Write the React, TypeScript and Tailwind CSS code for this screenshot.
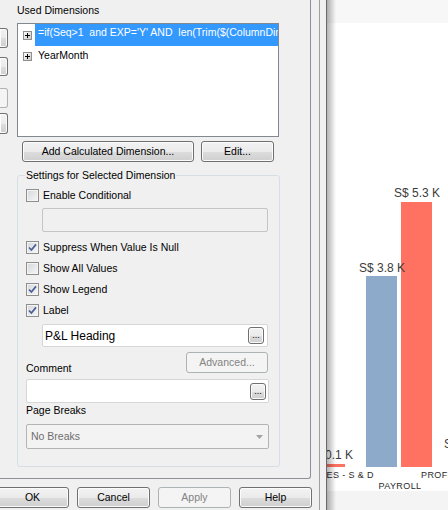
import { FC, ReactNode } from "react"
import clsx from "clsx"

const raised =
  "border-[#707070] bg-[linear-gradient(#f2f2f2,#ebebeb_50%,#dddddd_51%,#cfcfcf)] shadow-[inset_0_0_0_1px_#fbfbfb]"

interface WinButtonProps {
  children?: ReactNode
  className?: string
  disabled?: boolean
}

const WinButton: FC<WinButtonProps> = ({ children, className, disabled }) => (
  <button
    type="button"
    className={clsx(
      "flex h-[21px] shrink-0 items-center justify-center rounded-[3px] border text-[10.5px] leading-none",
      disabled ? "border-[#adb2b5] bg-[#f4f4f4] text-[#838383]" : clsx(raised, "text-black"),
      className
    )}
  >
    {children}
  </button>
)

const DotsButton: FC<{ className?: string }> = ({ className }) => (
  <button
    type="button"
    className={clsx(
      "flex h-[17px] w-[16px] items-end justify-center rounded-[3px] border pb-[3px] text-[9px] leading-none",
      raised,
      className
    )}
  >
    ...
  </button>
)

const CheckBox: FC<{ label: string; checked?: boolean }> = ({ label, checked }) => (
  <div className="flex h-[13px] items-center gap-[4px]">
    <span className="flex h-[13px] w-[13px] shrink-0 items-center justify-center border border-[#8e8f8f] bg-[linear-gradient(135deg,#d4d6da,#f7f7f7)] shadow-[inset_0_0_0_1px_#f4f4f4]">
      {checked && (
        <svg width="11" height="11" viewBox="0 0 11 11">
          <path d="M2 5.5 L4.4 8 L9 2.4" fill="none" stroke="#4a5f97" strokeWidth="1.7" />
        </svg>
      )}
    </span>
    <span className="leading-[13px] whitespace-nowrap">{label}</span>
  </div>
)

const Expander = () => (
  <svg width="9" height="9" viewBox="0 0 9 9" className="shrink-0">
    <defs>
      <linearGradient id="exp" x1="0" y1="0" x2="1" y2="1">
        <stop offset="0" stopColor="#ffffff" />
        <stop offset="1" stopColor="#c6c6c6" />
      </linearGradient>
    </defs>
    <rect x="0.5" y="0.5" width="8" height="8" fill="url(#exp)" stroke="#8f8f8f" />
    <path d="M2 4.5h5M4.5 2v5" stroke="#000" strokeWidth="1" />
  </svg>
)

// buttons of the neighbouring list, cut by the left edge
const SideButtons = () => (
  <div className="flex w-[8px] shrink-0 flex-col">
    <div className={clsx("mt-[28px] h-[20px] rounded-r-[3px] border border-l-0", raised)} />
    <div className={clsx("mt-[9px] h-[19px] rounded-r-[3px] border border-l-0", raised)} />
    <div className="mt-[12px] h-[20px] rounded-r-[3px] border border-l-0 border-[#adb2b5] bg-[#f4f4f4]" />
    <div className={clsx("mt-[5px] h-[21px] rounded-r-[3px] border border-l-0", raised)} />
  </div>
)

const DimensionList = () => (
  <div className="mt-[6px] h-[114px] w-[262px] overflow-hidden border border-[#828790] bg-white">
    <div className="flex h-[22px] items-start pl-[5px]">
      <div className="mt-[7px]">
        <Expander />
      </div>
      <div className="ml-[3px] h-[22px] flex-1 overflow-hidden bg-[#3399ff] pt-[2px] pl-[3px] leading-[13px] whitespace-pre text-white">
        {"=if(Seq>1  and EXP='Y' AND  len(Trim($(ColumnDim)))>0, PL_Heading)"}
      </div>
    </div>
    <div className="flex h-[20px] items-start pl-[5px]">
      <div className="mt-[6px]">
        <Expander />
      </div>
      <div className="ml-[6px] pt-[3px] leading-[13px]">YearMonth</div>
    </div>
  </div>
)

const DimensionSettings = () => (
  <fieldset className="mt-[7px] w-[263px] rounded-[3px] border border-[#d5dfe5] pb-[17px] pl-[8px]">
    <legend className="-ml-px px-px leading-[13px]">Settings for Selected Dimension</legend>

    <div className="mt-[7px]">
      <CheckBox label="Enable Conditional" />
    </div>
    <div className="mt-[6px] ml-[16px] h-[24px] w-[226px] rounded-[2px] border border-[#c5c5c5] bg-[#f0f0f0]" />

    <div className="mt-[9px]">
      <CheckBox label="Suppress When Value Is Null" checked />
    </div>
    <div className="mt-[8px]">
      <CheckBox label="Show All Values" />
    </div>
    <div className="mt-[8px]">
      <CheckBox label="Show Legend" checked />
    </div>
    <div className="mt-[8px]">
      <CheckBox label="Label" checked />
    </div>

    <div className="mt-[7px] ml-[16px] flex h-[23px] w-[226px] items-center justify-between rounded-[2px] border border-[#d6d6d6] bg-white pr-[3px] pl-[2px]">
      <span className="text-[12px] leading-none">P&amp;L Heading</span>
      <DotsButton />
    </div>

    <div className="mt-[5px] flex h-[21px] w-[242px] items-start justify-between">
      <span className="mt-[10px] leading-[13px]">Comment</span>
      <WinButton disabled className="w-[82px]">
        Advanced...
      </WinButton>
    </div>

    <div className="mt-[6px] flex h-[24px] w-[243px] items-center justify-end rounded-[2px] border border-[#d6d6d6] bg-white pr-[2px]">
      <DotsButton />
    </div>

    <div className="mt-[1px] leading-[13px]">Page Breaks</div>

    <div className="mt-[7px] flex h-[25px] w-[243px] items-center justify-between rounded-[2px] border border-[#b4b4b4] bg-[#f3f3f3] pr-[5px] pl-[4px]">
      <span className="leading-none text-[#6d6d6d]">No Breaks</span>
      <svg width="7" height="4" viewBox="0 0 7 4">
        <path d="M0 0h7L3.5 4z" fill="#a3a3a3" />
      </svg>
    </div>
  </fieldset>
)

const Chart = () => {
  const font = "Liberation Sans, Arial, sans-serif"
  return (
    <div className="relative flex w-[121px] shrink-0 flex-col bg-white">
      <div className="h-[23px] shrink-0 bg-[#f7f7f7]" />
      <svg className="block shrink-0" width="121" height="468" viewBox="327 23 121 468">
        <rect x="300" y="464" width="45" height="3" fill="#ff7262" />
        <rect x="366" y="276" width="31" height="191" fill="#8eaacb" />
        <rect x="401" y="202" width="31" height="265" fill="#ff7262" />

        <g fontFamily={font} fontSize="12" fill="#3c3c3c">
          <text x="353" y="459" textAnchor="end">S$ 0.1 K</text>
          <text x="382" y="272" textAnchor="middle">S$ 3.8 K</text>
          <text x="417" y="197" textAnchor="middle">S$ 5.3 K</text>
          <text x="444" y="448">S$ 0.4 K</text>
        </g>
        <g fontFamily={font} fontSize="9" fill="#2a2a2a" letterSpacing="0.4">
          <text x="374" y="478" textAnchor="end">EXPENSES - S &amp; D</text>
          <text x="400" y="489" textAnchor="middle">PAYROLL</text>
          <text x="421" y="478">PROFIT &amp; LOSS</text>
        </g>
      </svg>
      <div className="flex-1 bg-[#f4f4f4]" />
      <div className="pointer-events-none absolute inset-y-0 left-0 w-[9px] bg-linear-to-r from-black/30 to-transparent" />
    </div>
  )
}

export default function App() {
  return (
    <div className="flex h-[510px] w-[448px] overflow-hidden bg-[#f0f0f0] font-['Liberation_Sans',Arial,sans-serif] text-[10.5px] text-black">
      {/* dialog */}
      <div className="flex w-[320px] shrink-0 flex-col border-r border-[#a0a0a0]">
        <div className="flex h-[479px] w-[311px] rounded-br-[3px] border-r border-b border-[#8e8f9a]">
          <SideButtons />
          <div className="ml-[9px] flex w-[263px] flex-col">
            <div className="pt-[4px] leading-[13px]">Used Dimensions</div>
            <DimensionList />
            <div className="mt-[4px] ml-[5px] flex gap-[7px]">
              <WinButton className="w-[172px]">Add Calculated Dimension...</WinButton>
              <WinButton className="w-[73px]">Edit...</WinButton>
            </div>
            <DimensionSettings />
          </div>
        </div>

        <div className="mt-[8px] flex gap-[8px]">
          <WinButton className="-ml-[4px] w-[73px]">OK</WinButton>
          <WinButton className="w-[73px]">Cancel</WinButton>
          <WinButton disabled className="w-[73px]">
            Apply
          </WinButton>
          <WinButton className="w-[73px]">Help</WinButton>
        </div>
      </div>

      <div className="w-[7px] shrink-0 border-r border-[#6a6a6a] bg-[#f0f0f0]" />

      <Chart />
    </div>
  )
}
